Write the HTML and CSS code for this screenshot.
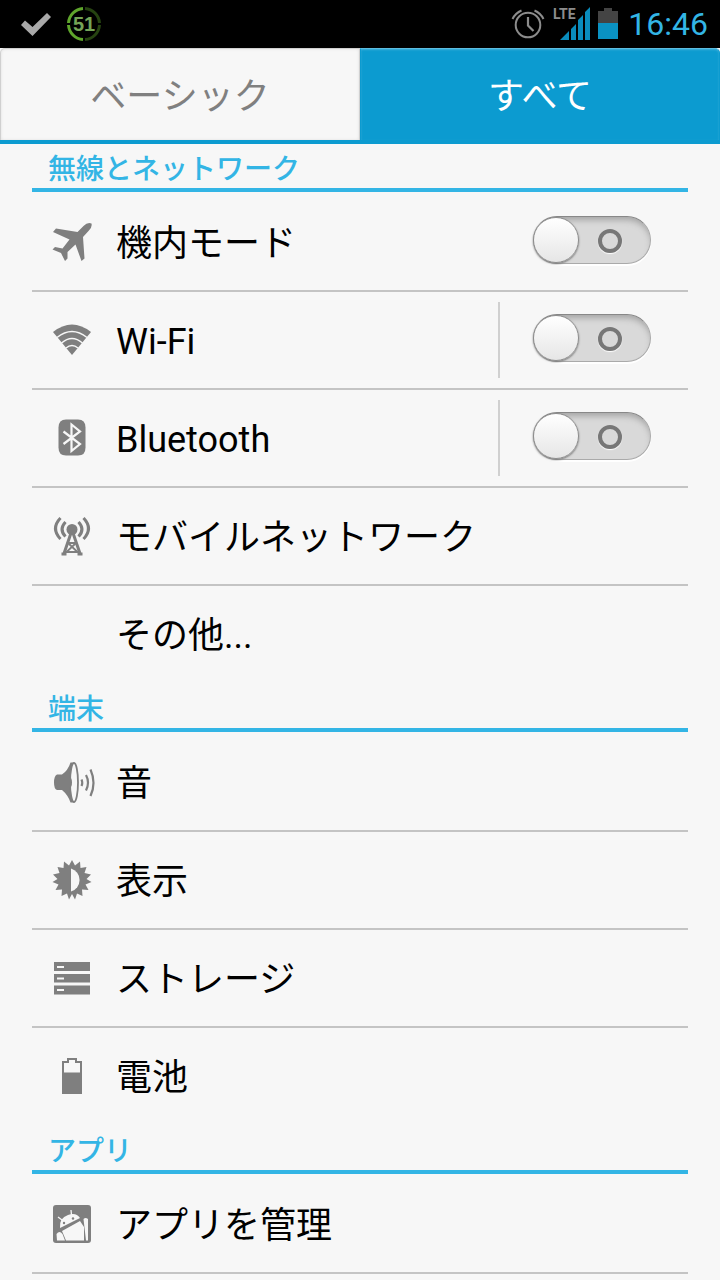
FILE: index.html
```html
<!DOCTYPE html>
<html lang="ja">
<head>
<meta charset="utf-8">
<meta name="viewport" content="width=device-width, initial-scale=1">
<title>設定</title>
<link rel="stylesheet" href="styles.css">
</head>
<body>
<header class="status">
  <div class="status-group status-left">
    <svg width="32" height="48" viewBox="20 0 32 48" aria-hidden="true"><path d="M21 25l4-4.500 7.500 6.500L47 13l4 4-18.500 19z" fill="#a9a9a9"/></svg>
    <svg width="36" height="48" viewBox="66 0 36 48" aria-hidden="true">
      <g fill="none" stroke-width="3"><path d="M83 8.500A15.500 15.500 0 0 0 68.500 23M68.500 25A15.500 15.500 0 0 0 83 39.500" stroke="#5fa62c"/><path d="M85 8.500A15.500 15.500 0 0 1 99.500 23M99.500 25A15.500 15.500 0 0 1 85 39.500" stroke="#264311"/></g>
      <text x="84" y="31" text-anchor="middle" class="badge-number">51</text>
    </svg>
  </div>
  <div class="status-group status-right">
    <svg width="34" height="48" viewBox="511 0 34 48" fill="none" stroke="#8c8c8c" stroke-width="2" aria-hidden="true"><circle cx="528" cy="25" r="12.300"/><path d="M528 17v8.500l5.500 5.500" stroke-width="2.200"/><path d="M512.500 19q3-6 9-8.500M543.500 19q-3-6-9-8.500"/></svg>
    <svg width="37" height="48" viewBox="553 0 37 48" aria-hidden="true"><path d="M560 40l9-9v9zM571 29l5-5v16h-5zM578 20l5-5v25h-5zM585 12l5-5v33h-5z" fill="#0a8cbc"/><text x="553" y="19" class="network">LTE</text></svg>
    <svg width="20" height="48" viewBox="598 0 20 48" aria-hidden="true"><path d="M598 11h6V8h8v3h6v12h-20z" fill="#444"/><path d="M598 23h20v16h-20z" fill="#0a92c3"/></svg>
    <time class="clock">16:46</time>
  </div>
</header>
<nav class="tabs">
  <button class="tab" type="button">ベーシック</button>
  <button class="tab tab-active" type="button" aria-current="true">すべて</button>
</nav>
<main class="settings">
  <section>
    <h2 class="title">無線とネットワーク</h2>
    <ul class="list">
      <li class="row">
        <svg class="icon" viewBox="0 0 48 48"><path d="M43.500 5.500q-4-1.500-8 2.500l-6 6L8 10.500 5 14 21.500 21.500 14.500 30.500 7 29 4.500 31.500 13 35 17 43 19.500 40.500V34L27.500 26.500 33.500 43 36.500 40.500 35 19l5.500-6q4-3.500 3-7.500z"/></svg>
        <label class="name" for="air">機内モード</label>
        <span class="switch-area"><input class="switch" id="air" type="checkbox" role="switch"></span>
      </li>
      <li class="row">
        <svg class="icon" viewBox="0 0 48 48"><path d="M24 39L5 16q19-15 38 0z"/><g fill="none" stroke="#f7f7f7" stroke-width="1.500"><path d="M9 21.500q15-12 30 0M13.500 27q10.500-9 21 0M18 32q6-5 12 0"/></g></svg>
        <label class="name" for="wifi">Wi-Fi</label>
        <span class="switch-area divided"><input class="switch" id="wifi" type="checkbox" role="switch"></span>
      </li>
      <li class="row">
        <svg class="icon" viewBox="0 0 48 48"><path d="M18 5.500h12q7.500 0 7.500 8v20q0 8-7.500 8H18q-7.500 0-7.500-8v-20q0-8 7.500-8z"/><path d="M15.500 17.500L32 30l-8.500 7V10.500L32 17.500 15.500 30" fill="none" stroke="#f7f7f7" stroke-width="2.200"/></svg>
        <label class="name" for="bluetooth">Bluetooth</label>
        <span class="switch-area divided"><input class="switch" id="bluetooth" type="checkbox" role="switch"></span>
      </li>
      <li class="row">
        <svg class="icon" viewBox="0 0 48 48"><circle cx="24" cy="17.500" r="5.500"/><g fill="none" stroke="#7f7f7f" stroke-width="3"><path d="M12.500 6q-10 10.500 0 21M17.500 10q-7 7.500 0 14.500M35.500 6q10 10.500 0 21M30.500 10q7 7.500 0 14.500"/><path d="M23 21L15.500 43M25 21l7.500 22M13.500 42h5M29.500 42h5"/><path d="M20 31h8M18 40h12M20 31l9.500 9M28 31l-9.500 9" stroke-width="1.800"/></g></svg>
        <a class="name" href="#mobile">モバイルネットワーク</a>
      </li>
      <li class="row">
        <span class="icon"></span>
        <a class="name" href="#more">その他...</a>
      </li>
    </ul>
  </section>
  <section>
    <h2 class="title">端末</h2>
    <ul class="list">
      <li class="row">
        <svg class="icon" viewBox="0 0 48 48"><path d="M9 16.500h5q6-4 8.500-12h4v40h-4Q20 37 14 32H9q-3-1-3-7.500t3-8z"/><ellipse cx="26" cy="24.500" rx="4" ry="19.500" fill="#f7f7f7" stroke="#7f7f7f" stroke-width="1.800"/><path d="M21 18.500q3 1 3 6t-3 6z"/><g fill="none" stroke="#7f7f7f" stroke-width="2.200"><path d="M33.500 21.500q1.500 3.500 0 6.500M38 17q4 7.500 0 15.500M42.500 11.500q6 13.500 0 26.500"/></g></svg>
        <a class="name" href="#sound">音</a>
      </li>
      <li class="row">
        <svg class="icon" viewBox="0 0 48 48"><path d="M24 4l3 5.500 5-4 .500 6.500 6-1-2 6 6.500 1.500-4.500 4.500 5 3-6 2.500 3 5.500-6.500-.500.500 6.500-5.500-2.500L27 43.500 24 38l-3 5.500L19 37.500 13.500 40l.500-6.500-6.500.500 3-5.500-6-2.500 5-3L5 18.500l6.500-1.500-2-6 6 1L16 5.500l5 4z"/><path d="M23 12.500a12 12 0 0 1 0 23z" fill="#f7f7f7"/></svg>
        <a class="name" href="#display">表示</a>
      </li>
      <li class="row">
        <svg class="icon" viewBox="0 0 48 48"><path d="M6 8h36v9H6zM6 20h36v8.500H6zM6 31.500h36v9H6z"/><path d="M9 12h7v2H9zM9 23.500h7v2H9zM9 35h7v2H9z" fill="#f7f7f7"/></svg>
        <a class="name" href="#storage">ストレージ</a>
      </li>
      <li class="row">
        <svg class="icon" viewBox="0 0 48 48"><path d="M14 9h5V6h10v3h5v33H14zM16 11v9.500h16V11h-5V8h-6v3z" fill-rule="evenodd"/></svg>
        <a class="name" href="#battery">電池</a>
      </li>
    </ul>
  </section>
  <section>
    <h2 class="title">アプリ</h2>
    <ul class="list">
      <li class="row">
        <svg class="icon" viewBox="0 0 48 48"><rect x="5" y="5" width="38" height="38" rx="3"/><path d="M12 28q-1-10 8-13 8-3 12 3zM14 31l18-10L36 27V40.500H18zM35.500 19q2-2 4.500 0v21.500H38zM8.500 34q3-4 6 0l2.500 6.500H9z" fill="#f7f7f7"/><path d="M14 20l-4-3M23.500 15l-.500-5" stroke="#f7f7f7" stroke-width="1.300"/><circle cx="16" cy="23" r="1.200"/><circle cx="25" cy="18.500" r="1.200"/></svg>
        <a class="name" href="#apps">アプリを管理</a>
      </li>
    </ul>
  </section>
</main>
</body>
</html>
```
FILE: styles.css
```css
*, ::before, ::after { box-sizing: border-box; }

body {
  margin: 0;
  background: #f7f7f7;
  color: #000;
  font-family: Roboto, "Noto Sans CJK JP", sans-serif;
}

.status {
  display: flex;
  justify-content: space-between;
  height: 48px;
  padding: 0 12px 0 20px;
  background: #000;
}
.status-group { display: flex; align-items: center; }
.status-left { gap: 14px; }
.status-right { gap: 8px; }
.clock {
  margin-left: 2px;
  color: #33b5e5;
  font-size: 32px;
  line-height: 48px;
}
.badge-number {
  fill: #74a457;
  font: bold 20px "Liberation Sans", sans-serif;
}
.network {
  fill: #8c8c8c;
  stroke: #000;
  stroke-width: 2px;
  paint-order: stroke;
  font: bold 14px Roboto, sans-serif;
}

.tabs {
  display: grid;
  grid-template-columns: 1fr 1fr;
  height: 96px;
  border-bottom: 4px solid #0c9bd0;
}
.tab {
  padding: 0 0 4px;
  border: 1px solid #d0d0d0;
  border-width: 1px 1px 0;
  border-radius: 5px 0 0 0;
  background: #f7f7f7;
  box-shadow: inset 0 0 3px #ddd;
  color: #808080;
  font: 36px "Noto Sans CJK JP", sans-serif;
}
.tab-active {
  border-color: #5dbde0 #0c9bd0 #0c9bd0;
  border-radius: 0 5px 0 0;
  background: #0c9bd0;
  box-shadow: inset 0 1px 2px #3eb0da;
  color: #fff;
}

.settings { padding: 0 32px; }
.title {
  height: 48px;
  margin: 0 0 2px;
  padding: 2px 16px 0;
  border-bottom: 4px solid #33b5e5;
  color: #33b5e5;
  font-size: 28px;
  font-weight: 500;
  line-height: 48px;
}
.list { margin: 0; padding: 0; list-style: none; }
.row {
  display: flex;
  align-items: center;
  height: 98px;
  padding: 0 36px 0 16px;
  border-bottom: 2px solid #c4c4c4;
}
section:not(:last-child) .row:last-child { border-color: transparent; }
.icon {
  flex: none;
  width: 48px;
  height: 48px;
  margin-right: 20px;
  fill: #7f7f7f;
}
.name {
  flex: 1;
  padding-top: 4px;
  color: inherit;
  font-size: 36px;
  line-height: 48px;
  text-decoration: none;
}
.switch-area {
  display: flex;
  align-items: center;
  height: 76px;
  padding-left: 32px;
}
.divided { border-left: 2px solid #d0d0d0; }
.switch {
  position: relative;
  appearance: none;
  width: 118px;
  height: 48px;
  margin: 0 1px 4px;
  border: 1px solid #aaa;
  border-top-color: #888;
  border-radius: 24px;
  background: #d9d9d9;
  box-shadow: inset 0 5px 6px -2px #a4a4a4, 0 2px 0 #fff;
}
.switch::before {
  position: absolute;
  top: 0;
  left: -1px;
  width: 46px;
  height: 46px;
  border: 1px solid #8c8c8c;
  border-radius: 50%;
  background: linear-gradient(#fff, #e6e6e6);
  box-shadow: 0 1px 2px #777;
  content: "";
}
.switch::after {
  position: absolute;
  top: 12px;
  left: 64px;
  width: 24px;
  height: 24px;
  border: 4px solid #777;
  border-radius: 50%;
  box-shadow: 0 1px 1px #fff;
  content: "";
}
.switch:checked::before { left: 70px; }
.switch:checked::after { left: 28px; }
```
